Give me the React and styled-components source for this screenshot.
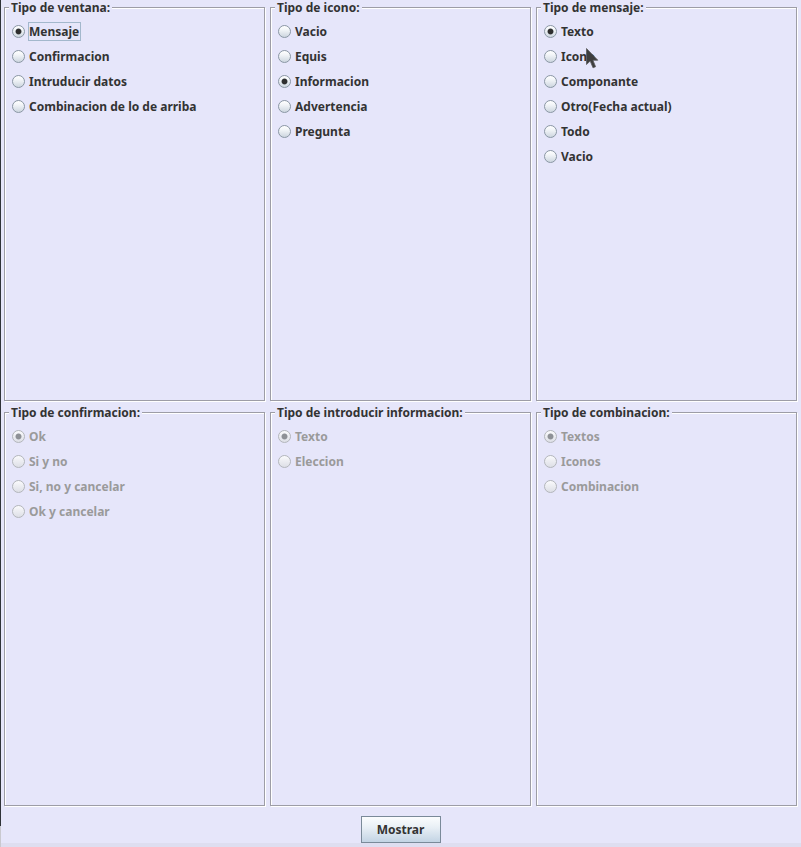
import React from "react";
import styled, { createGlobalStyle } from "styled-components";

const GlobalStyle = createGlobalStyle`
  html, body {
    margin: 0;
    padding: 0;
    background: #e6e6fa;
  }
  body {
    font-family: "Noto Sans", "Open Sans", sans-serif;
  }
`;

const Frame = styled.div`
  position: relative;
  width: 801px;
  height: 847px;
  box-sizing: border-box;
  padding: 0 4px;
  background:
    linear-gradient(#2f3338, #2f3338) 0 0 / 1px 826px no-repeat,
    linear-gradient(#c9c9cf, #c9c9cf) 0 826px / 1px 21px no-repeat,
    linear-gradient(#dedef0, #dedef0) 0 843px / 100% 4px no-repeat,
    #e6e6fa;
  overflow: hidden;
`;

const Grid = styled.div`
  display: grid;
  grid-template-columns: repeat(3, 261px);
  grid-template-rows: 401px 401px;
  column-gap: 5px;
  row-gap: 4px;
`;

const Group = styled.section`
  position: relative;
  margin-top: 7px;
  border: 1px solid #9d9da6;
  box-shadow: 1px 1px 0 #ffffff, inset 1px 1px 0 #ffffff;
`;

const Title = styled.h3`
  position: absolute;
  top: -8px;
  left: 4px;
  margin: 0;
  padding: 0 2px;
  background: #e6e6fa;
  font: 700 12px/16px "Noto Sans", "Open Sans", sans-serif;
  color: #333333;
  white-space: nowrap;
`;

const List = styled.div`
  display: flex;
  flex-direction: column;
  padding: 11px 0 0 7px;
`;

const Row = styled.label`
  display: flex;
  align-items: center;
  height: 25px;
`;

const Radio = styled.input`
  appearance: none;
  -webkit-appearance: none;
  flex: none;
  width: 13px;
  height: 13px;
  margin: 0 3px 0 0;
  box-sizing: border-box;
  border-radius: 50%;
  border: 1px solid #8a97a4;
  background: linear-gradient(#ffffff, #f2f5f8 35%, #cdd6df);
  outline: none;

  &:checked {
    background:
      radial-gradient(circle, #2e2e2e 0 2.4px, #6f7478 2.8px, transparent 3.4px),
      linear-gradient(#ffffff, #f2f5f8 35%, #cdd6df);
  }

  &:disabled {
    border-color: #b3b6bb;
    background: linear-gradient(#fbfbfd, #eeeff3 40%, #dddfe6);
  }

  &:disabled:checked {
    background:
      radial-gradient(circle, #8e9196 0 2.4px, #a9acb1 2.8px, transparent 3.4px),
      linear-gradient(#fbfbfd, #eeeff3 40%, #dddfe6);
  }
`;

const Text = styled.span`
  display: inline-block;
  border: 1px solid ${(p) => (p.$focused ? "#a3b8cc" : "transparent")};
  padding: 0 1px 0 0;
  font: 700 12px/17px "Noto Sans", "Open Sans", sans-serif;
  color: ${(p) => (p.$disabled ? "#9a9a9a" : "#333333")};
  white-space: nowrap;
`;

const Footer = styled.div`
  display: flex;
  justify-content: center;
  padding-top: 10px;
`;

const Button = styled.button`
  width: 80px;
  height: 27px;
  margin: 0;
  padding: 0;
  box-sizing: border-box;
  border: 1px solid #7a8a99;
  background: linear-gradient(#fbfdfe, #e9f0f6 40%, #c3d4e4);
  font: 700 12px/1 "Noto Sans", "Open Sans", sans-serif;
  color: #333333;
  cursor: default;
`;

const Cursor = styled.svg`
  position: absolute;
  left: 586px;
  top: 48px;
  pointer-events: none;
`;

const groups = [
  {
    name: "ventana",
    title: "Tipo de ventana:",
    options: ["Mensaje", "Confirmacion", "Intrudir datos", "Combinacion de lo de arriba"],
    checked: 0,
    focused: 0,
  },
  {
    name: "icono",
    title: "Tipo de icono:",
    options: ["Vacio", "Equis", "Informacion", "Advertencia", "Pregunta"],
    checked: 2,
  },
  {
    name: "mensaje",
    title: "Tipo de mensaje:",
    options: ["Texto", "Icono", "Componante", "Otro(Fecha actual)", "Todo", "Vacio"],
    checked: 0,
  },
  {
    name: "confirmacion",
    title: "Tipo de confirmacion:",
    options: ["Ok", "Si y no", "Si, no y cancelar", "Ok y cancelar"],
    checked: 0,
    disabled: true,
  },
  {
    name: "introducir",
    title: "Tipo de introducir informacion:",
    options: ["Texto", "Eleccion"],
    checked: 0,
    disabled: true,
  },
  {
    name: "combinacion",
    title: "Tipo de combinacion:",
    options: ["Textos", "Iconos", "Combinacion"],
    checked: 0,
    disabled: true,
  },
];

groups[0].options[2] = "Intruducir datos";

export default function App() {
  return (
    <>
      <GlobalStyle />
      <Frame>
        <Grid>
          {groups.map((g) => (
            <Group key={g.name}>
              <Title>{g.title}</Title>
              <List>
                {g.options.map((opt, i) => (
                  <Row key={opt}>
                    <Radio
                      type="radio"
                      name={g.name}
                      defaultChecked={i === g.checked}
                      disabled={!!g.disabled}
                    />
                    <Text $disabled={!!g.disabled} $focused={g.focused === i}>
                      {opt}
                    </Text>
                  </Row>
                ))}
              </List>
            </Group>
          ))}
        </Grid>
        <Footer>
          <Button type="button">Mostrar</Button>
        </Footer>
        <Cursor width="13" height="21" viewBox="0 0 13 21">
          <path
            d="M0.5 0.5 L0.5 16.5 L4.2 13 L7 19.8 L9.6 18.7 L6.9 12.2 L11.8 12.2 Z"
            fill="#3e3e3e"
            stroke="#5a5a5a"
            strokeWidth="0.8"
            strokeLinejoin="round"
          />
        </Cursor>
      </Frame>
    </>
  );
}
